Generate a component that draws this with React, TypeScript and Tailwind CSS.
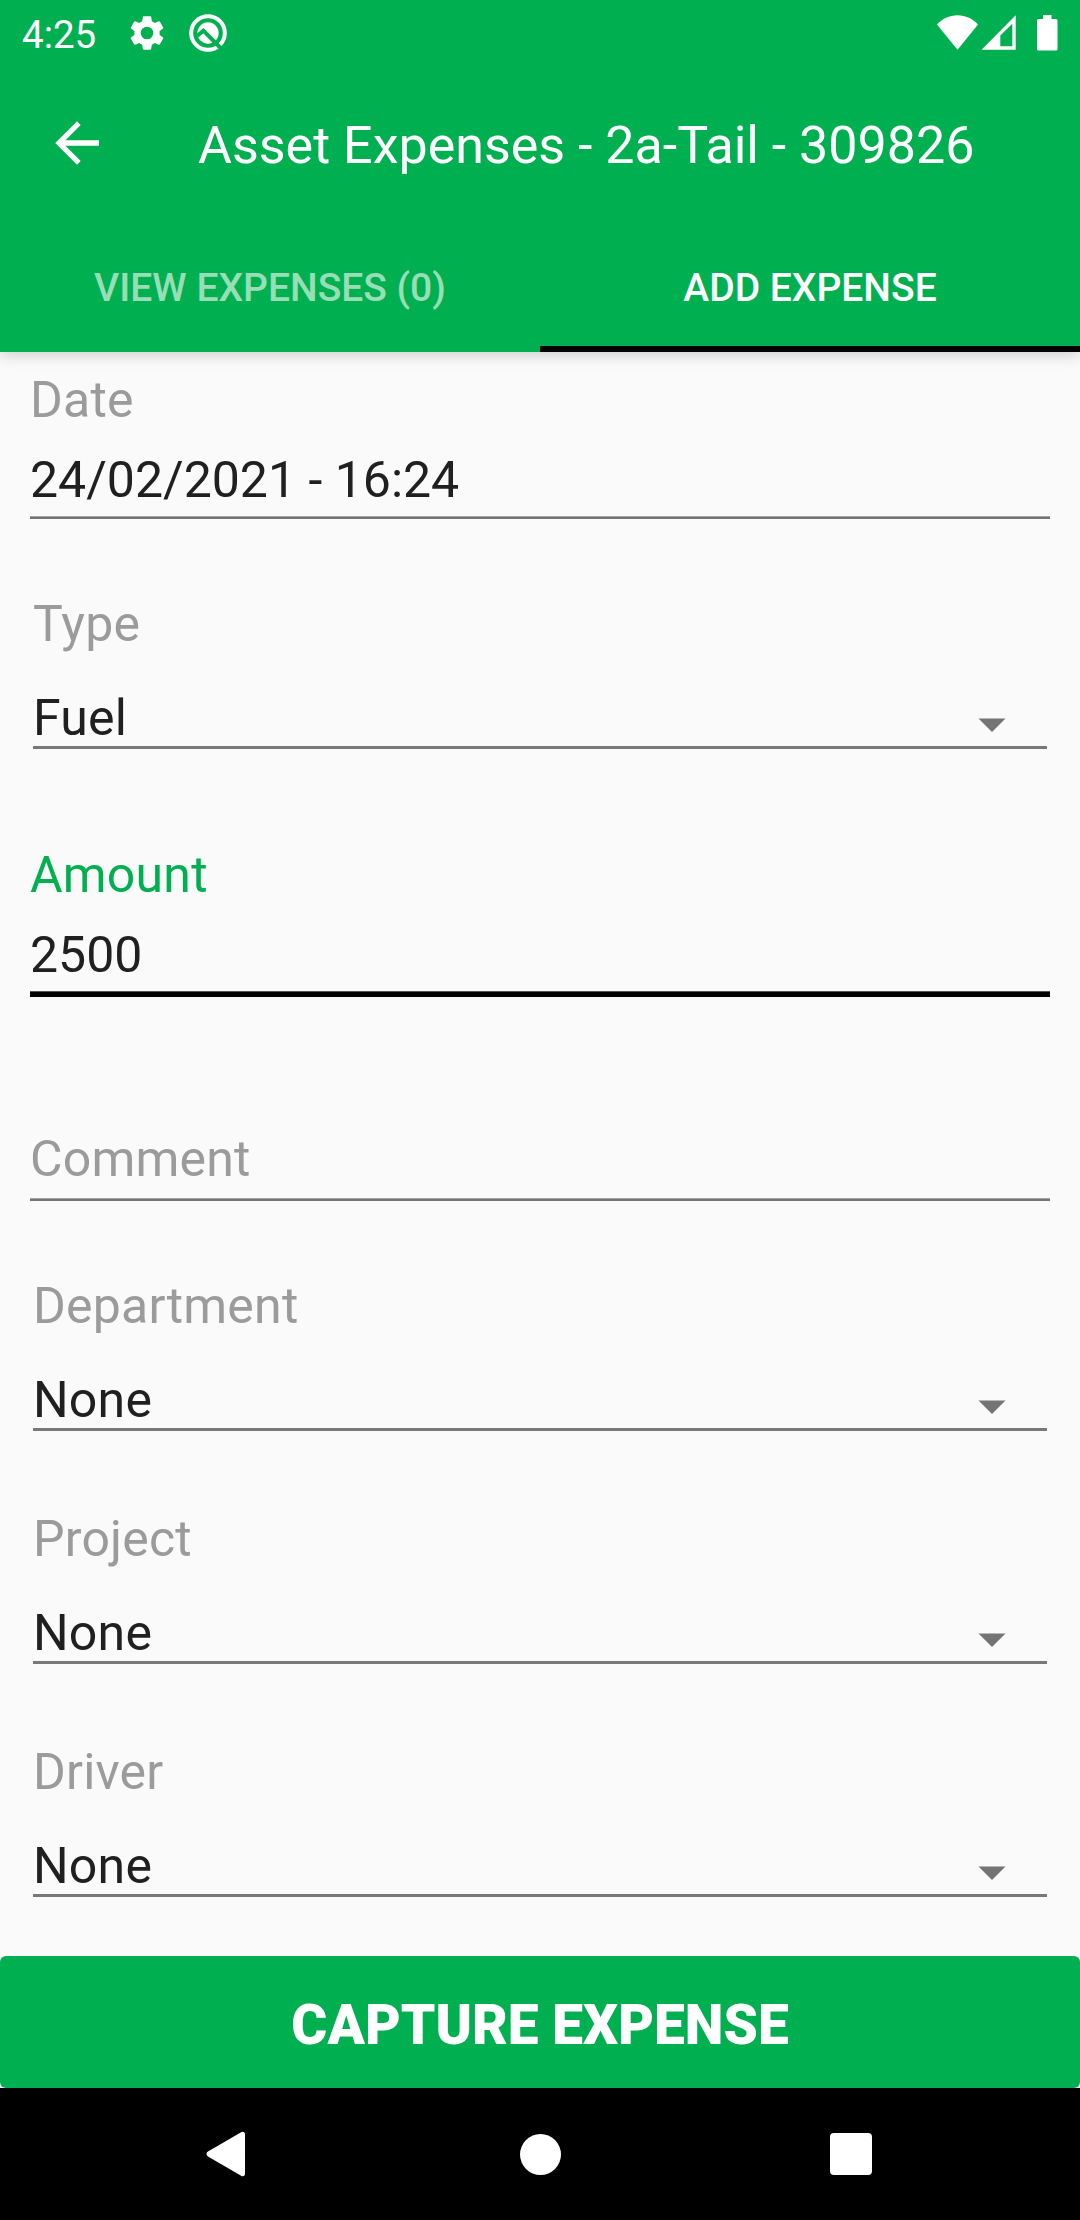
import React, { useState } from 'react';

interface EntryProps {
  label: string;
  value: string;
  focused?: boolean;
}

const Entry: React.FC<EntryProps> = ({ label, value, focused }) => (
  <div className="mx-[30px]">
    <div className={`h-[58px] tracking-[0.2px] ${focused ? 'text-[#00b050]' : 'text-[#9b9b9b]'}`}>{label}</div>
    <div className="mt-[22px] h-[65px] text-[#202020]">{value}</div>
    {focused ? (
      <div className="h-[6px] border-t border-[#555] bg-black" />
    ) : (
      <div className="h-[3px] border-t border-[#a2a2a2] bg-[#747474]" />
    )}
  </div>
);

const Picker: React.FC<{ label: string; value: string }> = ({ label, value }) => (
  <div className="mx-[33px]">
    <div className="h-[58px] tracking-[0.2px] text-[#9b9b9b]">{label}</div>
    <div className="mt-9 flex h-[57px] items-start justify-between pr-[41px]">
      <span className="tracking-[0.2px] text-[#202020]">{value}</span>
      <svg className="mt-[29px] h-[15px] w-[28px]" viewBox="0 0 28 15">
        <path d="M.5 .5h27L14 14z" fill="#747474" />
      </svg>
    </div>
    <div className="h-[3px] bg-[#787878]" />
  </div>
);

const StatusBar: React.FC = () => (
  <div className="flex h-[66px] items-start justify-between pr-[22px] pl-[22px]">
    <div className="flex">
      <span className="mt-[12px] w-[104px] text-[38.5px] leading-[45px]">4:25</span>
      <svg className="mt-[12px] h-[42px] w-[42px]" viewBox="0 0 24 24" fill="currentColor">
        <path d="M19.14 12.94c.04-.3.06-.61.06-.94 0-.32-.02-.64-.07-.94l2.03-1.58a.49.49 0 0 0 .12-.61l-1.92-3.32a.49.49 0 0 0-.59-.22l-2.39.96c-.5-.38-1.03-.7-1.62-.94l-.36-2.54a.48.48 0 0 0-.48-.41h-3.84c-.24 0-.43.17-.47.41l-.36 2.54c-.59.24-1.13.57-1.62.94l-2.39-.96a.48.48 0 0 0-.59.22L2.74 8.87c-.12.21-.08.47.12.61l2.03 1.58c-.05.3-.09.63-.09.94s.02.64.07.94l-2.03 1.58a.49.49 0 0 0-.12.61l1.92 3.32c.12.22.37.29.59.22l2.39-.96c.5.38 1.03.7 1.62.94l.36 2.54c.05.24.24.41.48.41h3.84c.24 0 .44-.17.47-.41l.36-2.54c.59-.24 1.13-.56 1.62-.94l2.39.96c.22.08.47 0 .59-.22l1.92-3.32a.48.48 0 0 0-.12-.61zM12 15.6a3.6 3.6 0 1 1 0-7.2 3.6 3.6 0 0 1 0 7.2z" />
      </svg>
      <svg className="mt-[13px] ml-[20px] h-[40px] w-[40px]" viewBox="0 0 120 120" fill="none">
        <circle cx="60" cy="60" r="50.5" stroke="#fff" strokeWidth="12" />
        <circle cx="60" cy="60" r="32" fill="#fff" />
        <path d="M28 68 46 53l62 62" stroke="#00b050" strokeWidth="12" />
      </svg>
    </div>
    <div className="mt-[15px] flex">
      <svg className="h-[35px] w-[41px]" viewBox="0 0 41 35" fill="currentColor">
        <path d="M0 9.5C5 4 12.500 .3 20.500 .3S36 4 41 9.500L20.500 34.700z" />
      </svg>
      <svg className="ml-[3px] h-[35px] w-[35px]" viewBox="0 0 35 35" fill="currentColor" fillRule="evenodd">
        <path d="M.5 34.700 34.700 .3v34.400zM19.300 20.500v10.800h12V8.800z" />
      </svg>
      <svg className="ml-[20px] h-[36px] w-[22px]" viewBox="0 0 22 36" fill="currentColor">
        <path d="M7 0h8.500v4h4.500a1.500 1.500 0 0 1 1.500 1.500V34a1.500 1.500 0 0 1-1.500 1.500H2.500A1.500 1.500 0 0 1 1 34V5.500A1.500 1.500 0 0 1 2.500 4H7z" />
      </svg>
    </div>
  </div>
);

const tabs = ['View Expenses (0)', 'Add Expense'];

const App: React.FC = () => {
  const [activeTab, setActiveTab] = useState(1);

  return (
    <div className="flex h-[2220px] w-[1080px] flex-col bg-[#fafafa] font-['Roboto',sans-serif]">
      <header className="relative flex h-[352px] flex-col bg-[#00b050] text-white shadow-[0_3px_14px_rgba(0,0,0,0.18)]">
        <StatusBar />
        <div className="flex h-[154px] items-center">
          <svg className="ml-[55px] h-[44px] w-[44px]" viewBox="0 0 44 44" fill="currentColor">
            <path d="M44 19.300H10.500L25.700 3.900 22 .2 .2 22 22 43.800l3.700-3.900-15.200-15.200H44z" />
          </svg>
          <h1 className="ml-[99px] pt-[5px] text-[52px] leading-[62px]">Asset Expenses - 2a-Tail - 309826</h1>
        </div>
        <nav className="grid flex-1 grid-cols-2">
          {tabs.map((tab, i) => (
            <button
              key={tab}
              onClick={() => setActiveTab(i)}
              className={`border-b-[6px] pt-[11px] text-[39px] font-medium uppercase ${
                i === activeTab ? 'border-black text-white' : 'border-transparent text-white/60'
              }`}
            >
              {tab}
            </button>
          ))}
        </nav>
      </header>

      <main className="flex-1 pt-[19px] text-[50px] leading-[58px]">
        <Entry label="Date" value="24/02/2021 - 16:24" />
        <div className="mt-[76px]">
          <Picker label="Type" value="Fuel" />
        </div>
        <div className="mt-[97px]">
          <Entry label="Amount" value="2500" focused />
        </div>
        <div className="mx-[30px] mt-[133px]">
          <div className="h-[68px] tracking-[0.2px] text-[#9b9b9b]">Comment</div>
          <div className="h-[3px] border-t border-[#a2a2a2] bg-[#747474]" />
        </div>
        <div className="mt-[76px] flex flex-col gap-[79px]">
          <Picker label="Department" value="None" />
          <Picker label="Project" value="None" />
          <Picker label="Driver" value="None" />
        </div>
      </main>

      <button className="h-[132px] rounded-[6px] bg-[#00b050] pt-[7px] text-[55px] font-black text-white uppercase">
        Capture Expense
      </button>

      <footer className="flex h-[132px] items-center justify-between bg-black pr-[208px] pl-[206px]">
        <svg className="h-[46px] w-[40px]" viewBox="0 0 41 46" fill="#fff">
          <path d="M2 20.500 36 .8c2-1.200 4-.3 4 2v40.400c0 2.300-2 3.200-4 2L2 25.500c-2-1.300-2-3.700 0-5z" />
        </svg>
        <div className="ml-[4px] h-[41px] w-[41px] rounded-full bg-white" />
        <div className="h-[42px] w-[42px] rounded-[4px] bg-white" />
      </footer>
    </div>
  );
};

export default App;
